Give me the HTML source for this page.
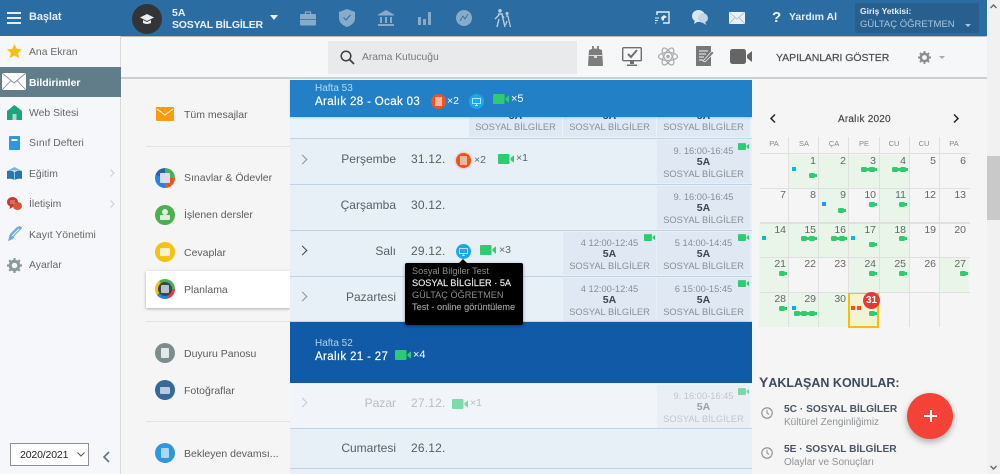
<!DOCTYPE html>
<html lang="tr"><head><meta charset="utf-8"><title>Planlama</title>
<style>
*{box-sizing:border-box}
html,body{margin:0;padding:0;width:1000px;height:474px;overflow:hidden;background:#f5f5f5;font-family:"Liberation Sans",sans-serif;color:#555}
body{filter:blur(.3px)}
.a{position:absolute}
.t{position:absolute;white-space:nowrap;line-height:14px}
svg{position:absolute;display:block;overflow:visible}
.nav{position:absolute;left:29px;font-size:10.4px;color:#666;line-height:14px;white-space:nowrap}
.sub{position:absolute;left:184px;font-size:10.5px;color:#5c5c5c;line-height:14px;white-space:nowrap}
.ci{position:absolute;left:155px;width:20px;height:20px;border-radius:50%}
.ci i{position:absolute;left:5px;top:5px;width:10px;height:10px;background:#fff;opacity:.8;border-radius:1px}
.row{position:absolute;left:290px;width:462px;background:#e7eff7;border-bottom:1px solid #bcd4ea}
.day{position:absolute;right:356px;top:13px;font-size:12px;line-height:15px;color:#56606a;white-space:nowrap}
.date{position:absolute;left:121px;top:13px;font-size:12px;line-height:15px;color:#56606a;letter-spacing:.2px}
.cell{position:absolute;width:93px;height:43px;background:#dfe8f3;text-align:center;font-size:9.3px;line-height:11.5px;color:#8a8f96;padding-top:5.5px}
.cell b{display:block;color:#3a4654;font-size:10.5px;font-weight:700}
.chev{position:absolute;left:11px;top:17px;width:7px;height:7px;border-top:1px solid #89929b;border-right:1px solid #89929b;transform:rotate(45deg)}
.cal{position:absolute;font-size:10.5px;color:#666;text-align:right;padding:0 3px 0 0;line-height:13px;height:34px;width:30px}
.g{background:#e9f5e9}
.hd{position:absolute;top:137px;height:16px;width:30px;text-align:center;font-size:7.5px;line-height:14px;color:#888}
.sep{position:absolute;background:#e0e0e0}
.cv{position:absolute;width:6px;height:5px;background:#2ecc71;border-radius:1.5px}
.cv:after{content:"";position:absolute;left:5.5px;top:1px;width:2px;height:3px;background:#2ecc71}
.sq{position:absolute;width:4px;height:4px}
</style></head><body>
<svg width="0" height="0" style="position:absolute"><defs>
<symbol id="vid" viewBox="0 0 16 10"><rect x="0" y="0" width="11.5" height="10" rx="1" fill="#2ecc71"/><path d="M12.5 4 L16 1.2 V8.8 L12.5 6 Z" fill="#2ecc71"/></symbol>
</defs></svg>

<!-- top bar -->
<div class="a" style="left:0;top:0;width:987px;height:36px;background:#2b6da3;box-shadow:0 1px 2px rgba(0,0,0,.35)"></div>
<div class="a" style="left:7px;top:12px;width:14px;height:2px;background:#e6eef5"></div>
<div class="a" style="left:7px;top:17px;width:14px;height:2px;background:#e6eef5"></div>
<div class="a" style="left:7px;top:22px;width:14px;height:2px;background:#e6eef5"></div>
<div class="t" style="left:29px;top:10px;font-size:11px;font-weight:700;color:#e4edf5;letter-spacing:-.1px">Başlat</div>
<div class="a" style="left:132px;top:4px;width:30px;height:30px;border-radius:50%;background:#333438"></div>
<svg style="left:140px;top:13px" width="14" height="12" viewBox="0 0 14 12"><path d="M7 1 L14 4.5 L7 8 L0 4.5 Z" fill="#eee"/><path d="M3 7 V10 Q7 12 11 10 V7 L7 9 Z" fill="#eee"/></svg>
<div class="t" style="left:172px;top:6px;font-size:10.5px;font-weight:700;color:#e8f0f6">5A</div>
<div class="t" style="left:172px;top:18px;font-size:10.5px;font-weight:700;color:#e8f0f6;letter-spacing:-.2px">SOSYAL BİLGİLER</div>
<div class="a" style="left:270px;top:15px;border-left:4.5px solid transparent;border-right:4.5px solid transparent;border-top:5px solid #e8f0f6"></div>
<!-- top icons -->
<svg style="left:300px;top:11px" width="16" height="15" viewBox="0 0 16 15"><path d="M5.5 3V1h5v2" fill="none" stroke="#87abc9" stroke-width="1.2"/><rect x="0" y="3" width="16" height="11.5" rx="1" fill="#87abc9"/><path d="M0 8.5h16" stroke="#2b6da3" stroke-width=".7"/></svg>
<svg style="left:339px;top:9px" width="16" height="18" viewBox="0 0 16 18"><path d="M8 0 L16 3 V9 Q16 15 8 18 Q0 15 0 9 V3 Z" fill="#87abc9"/><path d="M4.5 8.5 L7 11 L11.5 6" fill="none" stroke="#2b6da3" stroke-width="1"/></svg>
<svg style="left:378px;top:10px" width="16" height="16" viewBox="0 0 16 16"><path d="M8 0 L16 4.5 V5.5 H0 V4.5 Z" fill="#87abc9"/><path d="M2 7h2v6H2zM7 7h2v6H7zM12 7h2v6h-2zM0 14h16v2H0z" fill="#87abc9"/></svg>
<svg style="left:418px;top:12px" width="13" height="13" viewBox="0 0 13 13"><path d="M0 5h3v8H0zM5 7h3v6H5zM10 0h3v13h-3z" fill="#87abc9"/></svg>
<div class="a" style="left:456px;top:10px;width:16px;height:16px;border-radius:50%;background:#87abc9"></div>
<svg style="left:460px;top:14px" width="8" height="8" viewBox="0 0 8 8"><path d="M0 7 L3 2 L5 5 L8 0" fill="none" stroke="#2b6da3" stroke-width=".8"/></svg>
<svg style="left:494px;top:9px" width="17" height="18" viewBox="0 0 17 18"><circle cx="6" cy="1.8" r="1.8" fill="#b9cfe1"/><circle cx="13" cy="4.5" r="1.5" fill="#b9cfe1"/><path d="M4 5 L8 5 L9 10 L11 18 M5 10 L3 18 M5 6 L1 10 M8 6 L10 9" fill="none" stroke="#b9cfe1" stroke-width="1.4"/><path d="M12 7 L14 7 L15 12 L16.5 18 M13 12 L11.5 16" fill="none" stroke="#b9cfe1" stroke-width="1.2"/></svg>
<svg style="left:655px;top:11px" width="15" height="13" viewBox="0 0 15 13"><path d="M2 4V1h12v11H8" fill="none" stroke="#e6eef5" stroke-width="1.4"/><path d="M6 6.5 L9 4 L12 6 L9 7.5 V9.5 H7 Z" fill="#e6eef5"/><path d="M0 7h4M0 9.5h3M0 12h1.5" stroke="#e6eef5" stroke-width="1.1"/></svg>
<svg style="left:692px;top:10px" width="16" height="15" viewBox="0 0 16 15"><ellipse cx="6.5" cy="6" rx="6.5" ry="6" fill="#dbe7f0"/><ellipse cx="11" cy="8" rx="5" ry="4.8" fill="#c3d6e5"/><path d="M3 10 L2 14 L6 11.5 Z" fill="#dbe7f0"/><path d="M13 12 L14.5 15 L10 12.5 Z" fill="#c3d6e5"/></svg>
<svg style="left:729px;top:12px" width="16" height="12" viewBox="0 0 16 12"><rect width="16" height="12" fill="#e9f0f6"/><path d="M0 0 L8 7 L16 0 M0 12 L6 5.5 M16 12 L10 5.5" fill="none" stroke="#9dbad2" stroke-width=".8"/></svg>
<div class="t" style="left:772px;top:9px;font-size:15px;line-height:18px;font-weight:700;color:#f0f5f9">?</div>
<div class="t" style="left:789px;top:10px;font-size:10.5px;font-weight:700;color:#e4edf5">Yardım Al</div>
<div class="a" style="left:855px;top:3px;width:124px;height:30px;background:#275f8e;border-radius:2px"></div>
<div class="t" style="left:860px;top:5px;font-size:8.5px;font-weight:700;color:#e4edf5;line-height:12px">Giriş Yetkisi:</div>
<div class="t" style="left:860px;top:18px;font-size:9.5px;color:#a9c6de;line-height:13px">GÜLTAÇ ÖĞRETMEN</div>
<div class="a" style="left:965px;top:24px;border-left:3.5px solid transparent;border-right:3.5px solid transparent;border-top:3.5px solid #a9c6de"></div>

<!-- scrollbar -->
<div class="a" style="left:987px;top:0;width:13px;height:474px;background:#f1f1f1"></div>
<div class="a" style="left:987px;top:156px;width:13px;height:64px;background:#c9c9c9"></div>
<svg style="left:990px;top:4px" width="7" height="5" viewBox="0 0 7 5"><path d="M.5 4 L3.5 1 L6.5 4" fill="none" stroke="#666" stroke-width="1.4"/></svg>
<svg style="left:990px;top:465px" width="7" height="5" viewBox="0 0 7 5"><path d="M.5 1 L3.5 4 L6.5 1" fill="none" stroke="#666" stroke-width="1.4"/></svg>

<!-- sidebar -->
<div class="a" style="left:0;top:36px;width:121px;height:438px;background:#f5f7fa;border-right:1px solid #d9d9d9"></div>
<svg style="left:7px;top:44px" width="15" height="14" viewBox="0 0 15 14"><path d="M7.5 0 L9.8 4.9 L15 5.5 L11.1 9 L12.2 14 L7.5 11.5 L2.8 14 L3.9 9 L0 5.5 L5.2 4.9 Z" fill="#f4c20d"/></svg>
<div class="nav" style="top:46px">Ana Ekran</div>
<div class="a" style="left:0;top:67px;width:121px;height:30px;background:#627d8a"></div>
<svg style="left:2px;top:73px" width="24" height="17" viewBox="0 0 24 17"><rect width="24" height="17" fill="#fff"/><path d="M0 0 L12 10 L24 0 M0 17 L9 7.5 M24 17 L15 7.5" fill="none" stroke="#7d939e" stroke-width=".9"/></svg>
<div class="nav" style="top:77px;color:#fff;font-weight:700">Bildirimler</div>
<svg style="left:7px;top:105px" width="15" height="15" viewBox="0 0 15 15"><path d="M7.5 0 L15 6 V15 H0 V6 Z" fill="#1fa37f"/><rect x="5.5" y="9" width="4" height="6" fill="#a8dccb"/></svg>
<div class="nav" style="top:107px">Web Sitesi</div>
<svg style="left:9px;top:136px" width="11" height="14" viewBox="0 0 11 14"><rect width="11" height="14" rx="1" fill="#2f97dd"/><rect x="2.5" y="3" width="6" height="2" fill="#fff"/></svg>
<div class="nav" style="top:137px">Sınıf Defteri</div>
<svg style="left:7px;top:167px" width="15" height="13" viewBox="0 0 15 13"><path d="M7.5 0 L14 3.5 H1 Z" fill="#7fb5d8"/><path d="M0 4 Q4 3 7.5 5 Q11 3 15 4 V12 Q11 11 7.5 13 Q4 11 0 12 Z" fill="#2878ad"/><path d="M7.5 5v8" stroke="#bcd7e8" stroke-width=".8"/></svg>
<div class="nav" style="top:168px">Eğitim</div>
<svg style="left:110px;top:169px" width="5" height="8" viewBox="0 0 5 8"><path d="M.5 .5 L4 4 L.5 7.5" fill="none" stroke="#c9cdd1"/></svg>
<svg style="left:7px;top:197px" width="15" height="14" viewBox="0 0 15 14"><ellipse cx="5.5" cy="5" rx="5.5" ry="5" fill="#c73a2c"/><ellipse cx="10.5" cy="9" rx="4.5" ry="4" fill="#d9533f"/><path d="M3 6 h5 M3 4 h5" stroke="#f3c1b8" stroke-width=".8"/><path d="M3 9 L2.5 12 L6 10Z" fill="#c73a2c"/></svg>
<div class="nav" style="top:198px">İletişim</div>
<svg style="left:110px;top:200px" width="5" height="8" viewBox="0 0 5 8"><path d="M.5 .5 L4 4 L.5 7.5" fill="none" stroke="#c9cdd1"/></svg>
<svg style="left:7px;top:226px" width="16" height="16" viewBox="0 0 16 16"><path d="M1 15 L3 8 L10 1 Q14 -1 15 2 L8 11 Q5 14 1 15 Z" fill="#6ea9e0"/><path d="M5 10 L12 3 M7 11 L14 4" stroke="#f5f7fa" stroke-width="1"/></svg>
<div class="nav" style="top:229px">Kayıt Yönetimi</div>
<svg style="left:7px;top:258px" width="15" height="15" viewBox="0 0 15 15"><circle cx="7.5" cy="7.5" r="4.3" fill="none" stroke="#8a9a9c" stroke-width="3"/><path d="M7.5 0v3M7.5 12v3M0 7.5h3M12 7.5h3M2.2 2.2l2 2M10.8 10.8l2 2M12.8 2.2l-2 2M4.2 10.8l-2 2" stroke="#8a9a9c" stroke-width="2.2"/></svg>
<div class="nav" style="top:259px">Ayarlar</div>
<!-- year select -->
<div class="a" style="left:10px;top:443px;width:79px;height:23px;background:#fff;border:1px solid #8f8f8f"></div>
<div class="t" style="left:20px;top:448px;font-size:10.5px;color:#222;letter-spacing:-.15px">2020/2021</div>
<svg style="left:77px;top:452px" width="8" height="5" viewBox="0 0 8 5"><path d="M.5 .5 L4 4 L7.5 .5" fill="none" stroke="#555" stroke-width="1"/></svg>
<svg style="left:103px;top:451px" width="7" height="12" viewBox="0 0 7 12"><path d="M6 1 L1 6 L6 11" fill="none" stroke="#5d7382" stroke-width="1.6"/></svg>

<!-- toolbar -->
<div class="a" style="left:121px;top:37px;width:866px;height:42px;background:#f6f7f9;border-bottom:2px solid #cfcfcf"></div>
<div class="a" style="left:328px;top:41px;width:249px;height:33px;background:#e9eaeb"></div>
<svg style="left:340px;top:50px" width="15" height="15" viewBox="0 0 15 15"><circle cx="6" cy="6" r="4.8" fill="none" stroke="#3d3d3d" stroke-width="1.5"/><path d="M9.5 9.5 L14 14" stroke="#3d3d3d" stroke-width="1.7"/></svg>
<div class="t" style="left:362px;top:51px;font-size:10.3px;color:#77797b">Arama Kutucuğu</div>
<svg style="left:588px;top:46px" width="15" height="20" viewBox="0 0 15 20"><path d="M4 0h2v3H4zM9 0h2v3H9z" fill="#8a8a8a"/><path d="M1 4 Q7.5 1 14 4 L15 19 Q15 20 14 20 H1 Q0 20 0 19 Z" fill="#7d7d7d"/><path d="M0 9h15v1H0z" fill="#dcdcdc"/><path d="M6 10h3v2H6z" fill="#dcdcdc"/></svg>
<svg style="left:622px;top:47px" width="20" height="19" viewBox="0 0 20 19"><rect x=".7" y=".7" width="18.6" height="13" rx="1" fill="#f6f7f9" stroke="#6f6f6f" stroke-width="1.4"/><path d="M6 7 L9 10 L15 3" fill="none" stroke="#6f6f6f" stroke-width="2"/><path d="M8 14h4v3H8zM5 17.5h10v1.5H5z" fill="#6f6f6f"/></svg>
<svg style="left:658px;top:47px" width="20" height="19" viewBox="0 0 20 19"><g fill="none" stroke="#aaa" stroke-width="1.2"><ellipse cx="10" cy="9.5" rx="9.5" ry="4"/><ellipse cx="10" cy="9.5" rx="9.5" ry="4" transform="rotate(60 10 9.5)"/><ellipse cx="10" cy="9.5" rx="9.5" ry="4" transform="rotate(120 10 9.5)"/></g><circle cx="10" cy="9.5" r="1.8" fill="#aaa"/></svg>
<svg style="left:696px;top:46px" width="18" height="20" viewBox="0 0 18 20"><rect width="15" height="20" fill="#777"/><path d="M3 5h9M3 8h7M3 11h5M3 14h4" stroke="#f6f7f9" stroke-width="1"/><path d="M7 15 L16 5 L18 7 L9 16 Z" fill="#777" stroke="#f6f7f9" stroke-width=".7"/></svg>
<svg style="left:730px;top:49px" width="22" height="15" viewBox="0 0 22 15"><rect width="16" height="15" rx="2.5" fill="#656565"/><path d="M17 6 L22 2 V13 L17 9 Z" fill="#656565"/></svg>
<div class="t" style="left:776px;top:51px;font-size:10.5px;color:#4d4d4d;letter-spacing:-.05px;-webkit-text-stroke:.2px #4d4d4d">YAPILANLARI GÖSTER</div>
<svg style="left:918px;top:51px" width="13" height="13" viewBox="0 0 15 15"><circle cx="7.5" cy="7.5" r="4.3" fill="none" stroke="#8e8e8e" stroke-width="3"/><path d="M7.5 0v3M7.5 12v3M0 7.5h3M12 7.5h3M2.2 2.2l2 2M10.8 10.8l2 2M12.8 2.2l-2 2M4.2 10.8l-2 2" stroke="#8e8e8e" stroke-width="2.2"/></svg>
<div class="a" style="left:939px;top:56px;border-left:3px solid transparent;border-right:3px solid transparent;border-top:3px solid #aaa"></div>

<!-- submenu -->
<div class="a" style="left:121px;top:79px;width:169px;height:395px;background:#f5f5f5"></div>
<div class="a" style="left:156px;top:107px;width:18px;height:14px;background:#ff9a0e;border-radius:1px"></div>
<svg style="left:156px;top:107px" width="18" height="14" viewBox="0 0 18 14"><path d="M1 2 L9 8 L17 2" fill="none" stroke="#fff" stroke-width="1"/></svg>
<div class="sub" style="top:108px">Tüm mesajlar</div>
<div class="a" style="left:146px;top:146px;width:144px;height:1px;background:#e4e4e4"></div>
<div class="ci" style="top:168px;background:conic-gradient(#4caf50 0 25%,#f4511e 25% 50%,#1e88e5 50% 80%,#2962a8 80%)"><i style="background:#d7dcf2;opacity:1"></i></div>
<div class="sub" style="top:171px">Sınavlar &amp; Ödevler</div>
<div class="ci" style="top:205px;background:#4caf50"><i style="left:7px;top:4px;width:6px;height:6px;border-radius:50%"></i><i style="left:5px;top:10px;width:10px;height:5px"></i></div>
<div class="sub" style="top:208px">İşlenen dersler</div>
<div class="ci" style="top:242px;background:#f5c20f"><i style="height:8px;top:6px"></i></div>
<div class="sub" style="top:246px">Cevaplar</div>
<div class="a" style="left:146px;top:271px;width:144px;height:37px;background:#fff;box-shadow:0 1px 3px rgba(0,0,0,.3)"></div>
<div class="ci" style="top:279px;background:conic-gradient(#4caf50 0 25%,#e53935 25% 45%,#1e88e5 45% 65%,#f4c20d 65% 90%,#4caf50 90%)"><i style="left:3px;top:3px;width:14px;height:14px;background:#37474f;opacity:1;border-radius:50%"></i><i style="left:6px;top:6px;width:8px;height:8px;background:#b6c2cb;opacity:1"></i></div>
<div class="sub" style="top:283px">Planlama</div>
<div class="a" style="left:146px;top:321px;width:144px;height:1px;background:#e4e4e4"></div>
<div class="ci" style="top:343px;background:#7f8c8d"><i style="left:6px;width:8px"></i></div>
<div class="sub" style="top:347px">Duyuru Panosu</div>
<div class="ci" style="top:380px;background:#34699a"><i style="height:7px;top:7px;opacity:.65"></i></div>
<div class="sub" style="top:384px">Fotoğraflar</div>
<div class="a" style="left:146px;top:421px;width:144px;height:1px;background:#e4e4e4"></div>
<div class="ci" style="top:443px;background:#2f97dd"><i style="left:6px;width:8px;opacity:.6"></i></div>
<div class="sub" style="top:447px">Bekleyen devamsı...</div>

<!-- main list -->
<div class="a" style="left:290px;top:80px;width:462px;height:394px;background:#e7eff7"></div>
<div class="row" style="top:117px;height:22px;background:#eaf2fa"></div>
<div class="a" style="left:469px;top:117px;width:93px;height:20px;background:#dfe9f4"></div>
<div class="a" style="left:563px;top:117px;width:93px;height:20px;background:#dfe9f4"></div>
<div class="a" style="left:657px;top:117px;width:93px;height:20px;background:#dfe9f4"></div>
<div class="t" style="left:469px;width:93px;top:111px;text-align:center;font-size:10.5px;font-weight:700;line-height:11px;color:#3a4654">5A</div>
<div class="t" style="left:563px;width:93px;top:111px;text-align:center;font-size:10.5px;font-weight:700;line-height:11px;color:#3a4654">5A</div>
<div class="t" style="left:657px;width:93px;top:111px;text-align:center;font-size:10.5px;font-weight:700;line-height:11px;color:#3a4654">5A</div>
<div class="t" style="left:469px;width:93px;top:121px;text-align:center;font-size:9.3px;line-height:12px;color:#8a8f96">SOSYAL BİLGİLER</div>
<div class="t" style="left:563px;width:93px;top:121px;text-align:center;font-size:9.3px;line-height:12px;color:#8a8f96">SOSYAL BİLGİLER</div>
<div class="t" style="left:657px;width:93px;top:121px;text-align:center;font-size:9.3px;line-height:12px;color:#8a8f96">SOSYAL BİLGİLER</div>

<!-- week 53 -->
<div class="a" style="left:290px;top:80px;width:462px;height:37px;background:#2281c6;box-shadow:0 1px 2px rgba(0,0,0,.15)"></div>
<div class="t" style="left:315px;top:83px;font-size:10px;line-height:12px;color:#b7d8f0">Hafta 53</div>
<div class="t" style="left:315px;top:95px;font-size:11.5px;line-height:14px;color:#fff;letter-spacing:.35px;-webkit-text-stroke:.2px #fff">Aralık 28 - Ocak 03</div>
<div class="a" style="left:431px;top:94px;width:15px;height:15px;border-radius:50%;background:#f4511e"></div>
<div class="a" style="left:435px;top:97px;width:7px;height:9px;background:#f6b7a0"></div>
<div class="t" style="left:447px;top:94px;font-size:10.5px;color:#fff">×2</div>
<div class="a" style="left:469px;top:94px;width:15px;height:15px;border-radius:50%;background:#1aa7f0"></div>
<svg style="left:472px;top:98px" width="9" height="8" viewBox="0 0 9 8"><rect x=".5" y=".5" width="8" height="5" fill="none" stroke="#d5f0fd" stroke-width=".8"/><path d="M3 7.5h3M4.5 5.5v2" stroke="#d5f0fd" stroke-width=".8"/></svg>
<svg style="left:493px;top:94px" width="16" height="10"><use href="#vid"/></svg>
<div class="t" style="left:511px;top:92px;font-size:11px;color:#fff">×5</div>

<!-- Perşembe -->
<div class="row" style="top:139px;height:46px"><div class="chev" style="left:9px;top:17px"></div><div class="day">Perşembe</div><div class="date">31.12.</div></div>
<div class="a" style="left:456px;top:153px;width:15px;height:15px;border-radius:50%;background:#f4511e;box-shadow:0 0 2px rgba(244,81,30,.6)"></div>
<div class="a" style="left:460px;top:156px;width:7px;height:9px;background:#f6b7a0"></div>
<div class="t" style="left:474px;top:153px;font-size:10.5px;color:#5c6670">×2</div>
<svg style="left:498px;top:154px" width="16" height="10"><use href="#vid"/></svg>
<div class="t" style="left:516px;top:151px;font-size:10.5px;color:#5c6670">×1</div>
<div class="cell" style="left:657px;top:140px">9. 16:00-16:45<b>5A</b>SOSYAL BİLGİLER</div>
<svg style="left:738px;top:143px" width="11" height="7"><use href="#vid"/></svg>

<!-- Çarşamba -->
<div class="row" style="top:185px;height:46px"><div class="day">Çarşamba</div><div class="date">30.12.</div></div>
<div class="cell" style="left:657px;top:186px">9. 16:00-16:45<b>5A</b>SOSYAL BİLGİLER</div>

<!-- Salı -->
<div class="row" style="top:231px;height:46px"><div class="chev" style="left:9px;top:16px;border-color:#3d4750;border-width:1.5px 1.5px 0 0"></div><div class="day">Salı</div><div class="date">29.12.</div></div>
<div class="a" style="left:456px;top:244px;width:15px;height:15px;border-radius:50%;background:#1aa7f0"></div>
<svg style="left:459px;top:248px" width="9" height="8" viewBox="0 0 9 8"><rect x=".5" y=".5" width="8" height="5" fill="none" stroke="#d5f0fd" stroke-width=".8"/><path d="M3 7.5h3M4.5 5.5v2" stroke="#d5f0fd" stroke-width=".8"/></svg>
<svg style="left:480px;top:245px" width="16" height="10"><use href="#vid"/></svg>
<div class="t" style="left:499px;top:243px;font-size:10.5px;color:#5c6670">×3</div>
<div class="cell" style="left:563px;top:232px">4 12:00-12:45<b>5A</b>SOSYAL BİLGİLER</div>
<div class="cell" style="left:657px;top:232px">5 14:00-14:45<b>5A</b>SOSYAL BİLGİLER</div>
<svg style="left:644px;top:234px" width="11" height="7"><use href="#vid"/></svg>
<svg style="left:738px;top:234px" width="11" height="7"><use href="#vid"/></svg>

<!-- Pazartesi -->
<div class="row" style="top:277px;height:45px"><div class="chev" style="left:9px;top:16px"></div><div class="day">Pazartesi</div><div class="date">28.12.</div></div>
<div class="cell" style="left:563px;top:278px">4 12:00-12:45<b>5A</b>SOSYAL BİLGİLER</div>
<div class="cell" style="left:657px;top:278px">6 15:00-15:45<b>5A</b>SOSYAL BİLGİLER</div>
<svg style="left:738px;top:280px" width="11" height="7"><use href="#vid"/></svg>

<!-- week 52 -->
<div class="a" style="left:290px;top:322px;width:462px;height:61px;background:#105aa8"></div>
<div class="t" style="left:315px;top:338px;font-size:10px;line-height:12px;color:#b4cfe9">Hafta 52</div>
<div class="t" style="left:315px;top:350px;font-size:11.5px;line-height:14px;color:#fff;letter-spacing:.35px;-webkit-text-stroke:.2px #fff">Aralık 21 - 27</div>
<svg style="left:395px;top:350px" width="16" height="10"><use href="#vid"/></svg>
<div class="t" style="left:413px;top:348px;font-size:11px;color:#fff">×4</div>

<!-- Pazar -->
<div class="row" style="top:384px;height:45px;background:#f1f5fa"><div class="chev" style="left:9px;top:15px;border-color:#c5cad0"></div><div class="day" style="top:12px;color:#b9bdc2">Pazar</div><div class="date" style="top:12px;color:#b9bdc2">27.12.</div></div>
<svg style="left:452px;top:399px;opacity:.6" width="16" height="10"><use href="#vid"/></svg>
<div class="t" style="left:470px;top:396px;font-size:10.5px;color:#b9bdc2">×1</div>
<div class="cell" style="left:657px;top:385px;background:#eaeff6;color:#c3c7cc">9. 16:00-16:45<b style="color:#9ba1a8">5A</b>SOSYAL BİLGİLER</div>
<svg style="left:738px;top:388px;opacity:.6" width="11" height="7"><use href="#vid"/></svg>

<!-- Cumartesi -->
<div class="row" style="top:429px;height:40px"><div class="day" style="top:12px">Cumartesi</div><div class="date" style="top:12px">26.12.</div></div>

<!-- tooltip -->
<div class="a" style="left:405px;top:263px;width:118px;height:62px;background:#000;border-radius:2px;box-shadow:0 1px 3px rgba(0,0,0,.4)"></div>
<div class="a" style="left:459px;top:259px;border-left:4px solid transparent;border-right:4px solid transparent;border-bottom:4px solid #000"></div>
<div class="t" style="left:412px;top:265px;font-size:9.2px;line-height:12px;color:#8d8d8d">Sosyal Bilgiler Test</div>
<div class="t" style="left:412px;top:277px;font-size:9.2px;line-height:12px;color:#eee;-webkit-text-stroke:.15px #eee">SOSYAL BİLGİLER · 5A</div>
<div class="t" style="left:412px;top:289px;font-size:9.2px;line-height:12px;color:#8d8d8d">GÜLTAÇ ÖĞRETMEN</div>
<div class="t" style="left:412px;top:301px;font-size:9.2px;line-height:12px;color:#9a9a9a;-webkit-text-stroke:.15px #9a9a9a">Test - online görüntüleme</div>

<!-- right panel -->
<div class="a" style="left:752px;top:79px;width:235px;height:395px;background:#f5f5f5"></div>
<svg style="left:770px;top:114px" width="6" height="9" viewBox="0 0 6 9"><path d="M5 .5 L1 4.5 L5 8.5" fill="none" stroke="#222" stroke-width="1.5"/></svg>
<svg style="left:953px;top:114px" width="6" height="9" viewBox="0 0 6 9"><path d="M1 .5 L5 4.5 L1 8.5" fill="none" stroke="#222" stroke-width="1.5"/></svg>
<div class="t" style="left:838px;top:113px;font-size:10px;color:#444;letter-spacing:.2px;-webkit-text-stroke:.15px #444">Aralık 2020</div>
<div class="hd" style="left:759px">PA</div><div class="hd" style="left:789px">SA</div><div class="hd" style="left:819px">ÇA</div><div class="hd" style="left:849px">PE</div><div class="hd" style="left:879px">CU</div><div class="hd" style="left:909px">CU</div><div class="hd" style="left:939px">PA</div>

<div class="cal g" style="left:789px;top:155px">1</div>
<div class="cal g" style="left:819px;top:155px">2</div>
<div class="cal g" style="left:849px;top:155px">3</div>
<div class="cal g" style="left:879px;top:155px">4</div>
<div class="cal" style="left:909px;top:155px">5</div>
<div class="cal" style="left:939px;top:155px">6</div>
<div class="cal" style="left:759px;top:189px">7</div>
<div class="cal" style="left:789px;top:189px">8</div>
<div class="cal g" style="left:819px;top:189px">9</div>
<div class="cal" style="left:849px;top:189px">10</div>
<div class="cal g" style="left:879px;top:189px">11</div>
<div class="cal" style="left:909px;top:189px">12</div>
<div class="cal" style="left:939px;top:189px">13</div>
<div class="cal g" style="left:759px;top:224px">14</div>
<div class="cal g" style="left:789px;top:224px">15</div>
<div class="cal g" style="left:819px;top:224px">16</div>
<div class="cal g" style="left:849px;top:224px">17</div>
<div class="cal g" style="left:879px;top:224px">18</div>
<div class="cal" style="left:909px;top:224px">19</div>
<div class="cal" style="left:939px;top:224px">20</div>
<div class="cal g" style="left:759px;top:258px">21</div>
<div class="cal" style="left:789px;top:258px">22</div>
<div class="cal" style="left:819px;top:258px">23</div>
<div class="cal g" style="left:849px;top:258px">24</div>
<div class="cal g" style="left:879px;top:258px">25</div>
<div class="cal" style="left:909px;top:258px">26</div>
<div class="cal g" style="left:939px;top:258px">27</div>
<div class="cal g" style="left:759px;top:293px">28</div>
<div class="cal g" style="left:789px;top:293px">29</div>
<div class="cal g" style="left:819px;top:293px">30</div>
<div class="a" style="left:848px;top:292px;width:31px;height:36px;background:#f1f3d3;border:2px solid #fbbc05"></div>

<!-- calendar grid lines -->
<div class="sep" style="left:760px;top:153px;width:210px;height:1px"></div>
<div class="sep" style="left:760px;top:188px;width:210px;height:1px"></div>
<div class="sep" style="left:760px;top:222px;width:210px;height:2px"></div>
<div class="sep" style="left:760px;top:257px;width:210px;height:1px"></div>
<div class="sep" style="left:760px;top:292px;width:210px;height:1px"></div>
<div class="sep" style="left:788px;top:137px;width:1px;height:190px"></div>
<div class="sep" style="left:818px;top:137px;width:1px;height:190px"></div>
<div class="sep" style="left:848px;top:137px;width:1px;height:155px"></div>
<div class="sep" style="left:879px;top:137px;width:1px;height:155px"></div>
<div class="sep" style="left:909px;top:137px;width:1px;height:190px"></div>
<div class="sep" style="left:939px;top:137px;width:1px;height:190px"></div>

<!-- calendar events -->
<div class="sq" style="left:792px;top:167px;background:#00bcd4"></div>
<div class="cv" style="left:809px;top:173px"></div>
<div class="cv" style="left:861px;top:167px"></div><div class="cv" style="left:869px;top:167px"></div>
<div class="cv" style="left:892px;top:167px"></div><div class="cv" style="left:900px;top:167px"></div>
<div class="sq" style="left:822px;top:202px;background:#2196f3"></div>
<div class="cv" style="left:838px;top:208px"></div>
<div class="cv" style="left:869px;top:202px"></div>
<div class="cv" style="left:899px;top:202px"></div>
<div class="sq" style="left:762px;top:236px;background:#00bcd4"></div>
<div class="cv" style="left:801px;top:236px"></div><div class="cv" style="left:809px;top:236px"></div>
<div class="cv" style="left:831px;top:236px"></div><div class="cv" style="left:839px;top:236px"></div>
<div class="sq" style="left:851px;top:236px;background:#00bcd4"></div>
<div class="cv" style="left:869px;top:242px"></div>
<div class="cv" style="left:899px;top:236px"></div>
<div class="cv" style="left:779px;top:271px"></div>
<div class="cv" style="left:869px;top:271px"></div>
<div class="cv" style="left:899px;top:271px"></div>
<div class="cv" style="left:960px;top:271px"></div>
<div class="cv" style="left:779px;top:306px"></div>
<div class="sq" style="left:792px;top:306px;background:#03a9f4"></div>
<div class="cv" style="left:794px;top:311px"></div><div class="cv" style="left:801px;top:311px"></div><div class="cv" style="left:809px;top:311px"></div>
<div class="sq" style="left:851px;top:306px;background:#f4511e"></div><div class="sq" style="left:857px;top:306px;background:#f4511e"></div>
<div class="cv" style="left:869px;top:311px"></div>
<div class="a" style="left:863px;top:292px;width:17px;height:17px;border-radius:50%;background:#e53935;color:#fff;font-size:10px;font-weight:700;text-align:center;line-height:17px">31</div>

<!-- upcoming -->
<div class="t" style="left:759px;top:374px;font-size:14px;line-height:17px;color:#3d4a5c;font-weight:700">Y<span style="font-size:12.5px">AKLAŞAN KONULAR:</span></div>
<svg style="left:761px;top:407px" width="12" height="12" viewBox="0 0 12 12"><circle cx="6" cy="6" r="5.2" fill="none" stroke="#8c8c8c" stroke-width="1.1"/><path d="M6 2.8V6L8.2 7.5" fill="none" stroke="#8c8c8c" stroke-width="1"/></svg>
<div class="t" style="left:784px;top:403px;font-size:10.2px;font-weight:700;color:#4a5564;line-height:14px">5C · SOSYAL BİLGİLER</div>
<div class="t" style="left:784px;top:416px;font-size:10px;color:#8f9296;line-height:13px">Kültürel Zenginliğimiz</div>
<svg style="left:761px;top:447px" width="12" height="12" viewBox="0 0 12 12"><circle cx="6" cy="6" r="5.2" fill="none" stroke="#8c8c8c" stroke-width="1.1"/><path d="M6 2.8V6L8.2 7.5" fill="none" stroke="#8c8c8c" stroke-width="1"/></svg>
<div class="t" style="left:784px;top:443px;font-size:10.2px;font-weight:700;color:#4a5564;line-height:14px">5E · SOSYAL BİLGİLER</div>
<div class="t" style="left:784px;top:456px;font-size:10px;color:#8f9296;line-height:13px">Olaylar ve Sonuçları</div>
<div class="a" style="left:907px;top:393px;width:46px;height:46px;border-radius:50%;background:#f44336;box-shadow:0 3px 7px rgba(0,0,0,.3)"></div>
<div class="a" style="left:924px;top:415px;width:13px;height:2px;background:#fff"></div>
<div class="a" style="left:930px;top:410px;width:2px;height:12px;background:#fff"></div>
</body></html>
